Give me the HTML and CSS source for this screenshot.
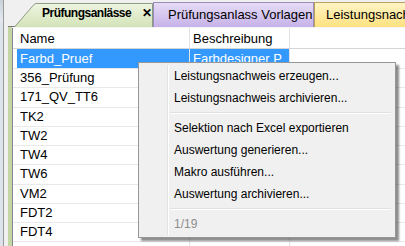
FILE: index.html
```html
<!DOCTYPE html>
<html lang="de">
<head>
    <meta charset="UTF-8">
    <title>Prüfungsanlässe</title>
    <link rel="stylesheet" href="styles.css">
</head>
<body>
    <div class="window">
        <div class="side">
            <div class="side-top"></div>
            <div class="side-list"></div>
        </div>

        <div class="main">
            <!-- Reiter -->
            <div class="tabs">
                <div class="tab tab-active">
                    <svg class="tab-shape" width="140" height="25" viewBox="0 0 140 25">
                        <defs>
                            <linearGradient id="g1" x1="0" y1="0" x2="0" y2="1">
                                <stop offset="0" stop-color="#eef5e1"/>
                                <stop offset="1" stop-color="#d3e3b8"/>
                            </linearGradient>
                        </defs>
                        <path d="M0.5 25 L20 2.5 Q21 1.5 23 1.5 L138.5 1.5 L138.5 25" fill="url(#g1)" stroke="#8c9c80"/>
                    </svg>
                    <span class="tab-label">Prüfungsanlässe</span>
                    <span class="tab-close">✕</span>
                </div>
                <div class="tab tab-purple">Prüfungsanlass Vorlagen</div>
                <div class="tab tab-yellow">Leistungsnachweise</div>
            </div>

            <div class="pane">
                <div class="grid">
                    <div class="row head">
                        <div class="cell c1">Name</div>
                        <div class="cell c2">Beschreibung</div>
                        <div class="cell c3"></div>
                    </div>
                    <div class="row selected">
                        <div class="cell c1">Farbd_Pruef</div>
                        <div class="cell c2">Farbdesigner P</div>
                        <div class="cell c3"></div>
                    </div>
                    <div class="row"><div class="cell c1">356_Prüfung</div><div class="cell c2"></div><div class="cell c3"></div></div>
                    <div class="row"><div class="cell c1">171_QV_TT6</div><div class="cell c2"></div><div class="cell c3"></div></div>
                    <div class="row"><div class="cell c1">TK2</div><div class="cell c2"></div><div class="cell c3"></div></div>
                    <div class="row"><div class="cell c1">TW2</div><div class="cell c2"></div><div class="cell c3"></div></div>
                    <div class="row"><div class="cell c1">TW4</div><div class="cell c2"></div><div class="cell c3"></div></div>
                    <div class="row"><div class="cell c1">TW6</div><div class="cell c2"></div><div class="cell c3"></div></div>
                    <div class="row"><div class="cell c1">VM2</div><div class="cell c2"></div><div class="cell c3"></div></div>
                    <div class="row"><div class="cell c1">FDT2</div><div class="cell c2"></div><div class="cell c3"></div></div>
                    <div class="row"><div class="cell c1">FDT4</div><div class="cell c2"></div><div class="cell c3"></div></div>
                    <div class="row"><div class="cell c1"></div><div class="cell c2"></div><div class="cell c3"></div></div>
                </div>
            </div>
        </div>

        <!-- Kontextmenü -->
        <div class="context">
            <div class="item">Leistungsnachweis erzeugen...</div>
            <div class="item">Leistungsnachweis archivieren...</div>
            <div class="sep"></div>
            <div class="item">Selektion nach Excel exportieren</div>
            <div class="item">Auswertung generieren...</div>
            <div class="item">Makro ausführen...</div>
            <div class="item">Auswertung archivieren...</div>
            <div class="sep"></div>
            <div class="item disabled">1/19</div>
        </div>
    </div>
</body>
</html>
```

FILE: styles.css
```css
body {
    margin: 0;
    font-family: 'Liberation Sans', Arial, sans-serif;
    font-size: 13px;
    color: #000;
    background-color: #f0f0f0;
}

.window {
    position: relative;
    display: flex;
    width: 405px;
    height: 246px;
    overflow: hidden;
}

.side {
    flex-shrink: 0;
    width: 3px;
    border-right: 1px solid #9a9a9a;
    background-color: #dde3ea;
    margin-right: 4px;
}

.side-top {
    height: 22px;
    background: linear-gradient(#c9d2dc, #e6eaee);
}

.main {
    flex: 1;
    display: flex;
    flex-direction: column;
    min-width: 0;
}

.tabs {
    display: flex;
    height: 27px;
    padding-top: 2px;
    box-sizing: border-box;
    border-bottom: 1px solid #7a7a7a;
}

.tab {
    position: relative;
    flex-shrink: 0;
    height: 25px;
    line-height: 23px;
    box-sizing: border-box;
    font-size: 13px;
    white-space: nowrap;
    overflow: hidden;
}

.tab-active {
    width: 144px;
    margin-left: 6px;
    padding-left: 28px;
    font-size: 12px;
    font-weight: bold;
    letter-spacing: -0.5px;
    z-index: 1;
}

.tab-shape {
    position: absolute;
    left: 0;
    top: 0;
}

.tab-label, .tab-close {
    position: relative;
}

.tab-close {
    margin-left: 8px;
    font-size: 12px;
}

.tab-purple {
    width: 161px;
    margin-left: -5px;
    padding-left: 14px;
    background: linear-gradient(#e6dcf6, #c6b2e8);
    border: 1px solid #9b8db5;
    border-bottom: none;
}

.tab-yellow {
    flex: 1;
    flex-shrink: 1;
    min-width: 0;
    padding-left: 11px;
    background: linear-gradient(#fff4c4, #ffe180);
    border: 1px solid #b8a460;
    border-bottom: none;
    border-right: none;
}

.pane {
    flex: 1;
    border-left: 4px solid #c4d6a4;
    padding-top: 1px;
    background-color: #f5f5f5;
}

.grid {
    height: 100%;
    border-left: 1px solid #828790;
    background-color: #fff;
}

.row {
    display: flex;
    height: 18.25px;
    line-height: 18px;
    border-bottom: 1px solid #e9e9e9;
}

.row.head {
    height: 20px;
    line-height: 21px;
    border-bottom: 1px solid #d5d5d5;
}

.row.selected {
    height: 19px;
    line-height: 19px;
}

.cell {
    box-sizing: border-box;
    padding-left: 3px;
    white-space: nowrap;
    overflow: hidden;
}

.c1 {
    width: 173px;
    margin-left: 4px;
    border-right: 1px solid #e3e3e3;
}

.c2 {
    width: 100px;
    border-right: 1px solid #e3e3e3;
}

.c3 {
    flex: 1;
}

.row.selected .c1, .row.selected .c2 {
    background-color: #3399ff;
    color: #fff;
}

.context {
    position: absolute;
    left: 138px;
    top: 62px;
    width: 258px;
    padding: 2px;
    box-sizing: border-box;
    background-color: #f0f0f0;
    border: 1px solid #979797;
    box-shadow: 3px 3px 2px rgba(0, 0, 0, 0.45);
    font-size: 12px;
}

.context::before {
    content: '';
    position: absolute;
    left: 28px;
    top: 2px;
    bottom: 2px;
    border-left: 1px solid #e2e3e3;
    border-right: 1px solid #fff;
}

.item {
    height: 22px;
    line-height: 22px;
    padding-left: 33px;
}

.item.disabled {
    color: #8d8d8d;
}

.sep {
    height: 1px;
    margin: 3px 2px 3px 29px;
    background-color: #e0e0e0;
    border-bottom: 1px solid #fff;
}
```
